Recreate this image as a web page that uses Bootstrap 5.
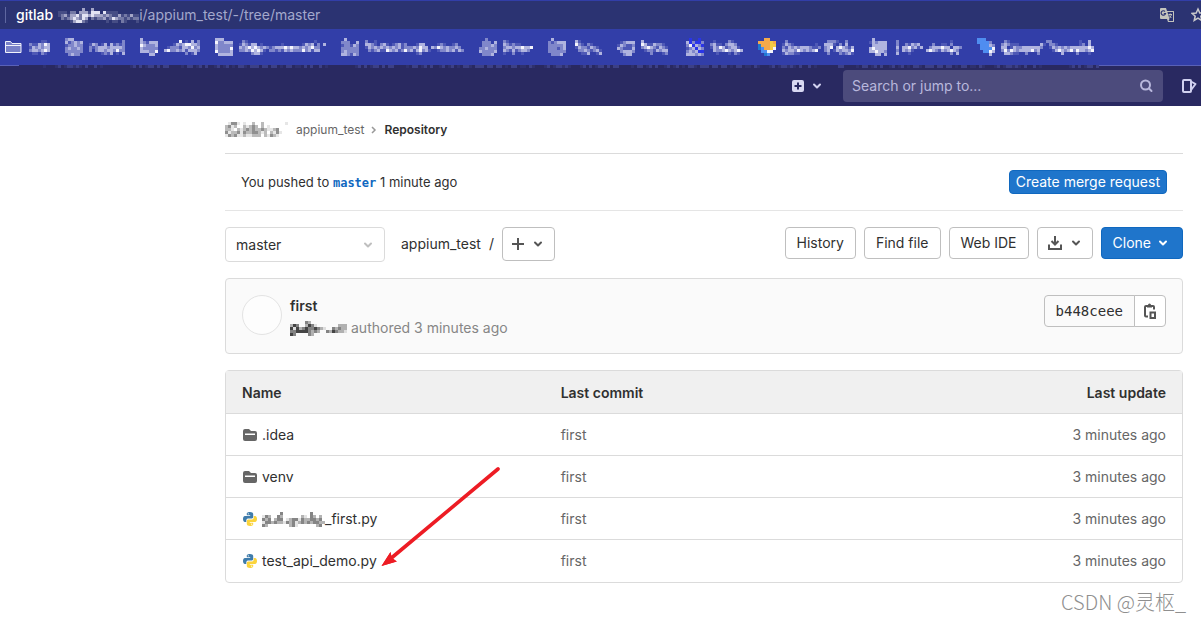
<!DOCTYPE html>
<html lang="en">
<head>
<meta charset="utf-8">
<meta name="viewport" content="width=device-width, initial-scale=1">
<title>Repository · appium_test</title>
<link href="https://cdn.jsdelivr.net/npm/bootstrap@5.3.0/dist/css/bootstrap.min.css" rel="stylesheet">
<style>
  :root { --line: #dbdbdb; --btn-line: #bfbfbf; --ink: #303030; --soft: #666; --blue: #1f75cb; }
  body { font-family: Inter, "Noto Sans CJK SC", sans-serif; font-size: 14px; line-height: 20px; color: var(--ink); background: #fff; overflow-x: hidden; }
  a { color: inherit; text-decoration: none; }
  svg { display: block; flex: none; }
  .url-bar { height: 29px; background: #2b3372; border-top: 1px solid #323ea8; color: #a3a8cc; padding: 0 0 0 5px; }
  .url-sep { width: 1px; height: 16px; background: #5f67a0; }
  .url-host { color: #fff; font-weight: 500; padding: 0 5px 0 10px; }
  .bookmark-bar { height: 36px; background: #323ea8; padding: 0 5px; gap: 15px; }
  .bookmark-item { gap: 6px; }
  .edge-strip { height: 3px; background: #292961; }
  .edge-line { height: 1px; background: #5961b8; }
  .top-nav { height: 38px; background: #292961; color: #d1d1f0; padding: 0 4px 2px 0; gap: 18px; }
  .icon-btn { border: 0; background: none; color: inherit; padding: 0; }
  .search-box { width: 320px; height: 32px; background: #4c4b7c; border-radius: 4px; padding: 0 9px; color: #b9b8dc; }
  .search-box input { border: 0; background: none; color: inherit; outline: 0; padding: 0; min-width: 0; }
  .search-box input::placeholder { color: #b9b8dc; opacity: 1; }
  .page-body { padding: 0 18px 0 225px; }
  .crumbs { height: 48px; font-size: 12px; border-bottom: 1px solid var(--line); color: var(--soft); }
  .crumbs b { color: var(--ink); font-weight: 600; }
  .push-row { height: 57px; padding: 0 16px; font-size: 13px; border-bottom: 1px solid #e5e5e5; }
  .push-row a { font: 700 12px "DejaVu Sans Mono", monospace; color: #1068bf; }
  .gl-btn { height: 32px; padding: 0 11px; border: 1px solid var(--btn-line); border-radius: 4px; background: #fff; color: var(--ink); font-size: 14px; line-height: 20px; display: inline-flex; align-items: center; justify-content: center; gap: 4px; white-space: nowrap; }
  .gl-blue { background: var(--blue); border-color: #1068bf; color: #fff; }
  .gl-slim { height: 24px; padding: 0 6px; }
  .gl-tall { height: 34px; padding: 0 8px; gap: 5px; }
  .ref-select { width: 160px; height: 35px; border-color: var(--line); border-radius: 4px; padding: 0 32px 0 10px; font-size: 14px; color: var(--ink);
    background-image: url("data:image/svg+xml,%3csvg xmlns='http://www.w3.org/2000/svg' viewBox='0 0 16 16'%3e%3cpath fill='none' stroke='%23bfbfbf' stroke-width='2' stroke-linecap='round' stroke-linejoin='round' d='M5 6.500 8 9.500l3-3'/%3e%3c/svg%3e"); background-size: 16px; background-position: right 8px center; }
  .commit-box { height: 76px; padding: 16px; border: 1px solid var(--line); border-radius: 4px; background: #fafafa; line-height: 22px; }
  .avatar-ring { width: 40px; height: 40px; border-radius: 50%; border: 1px solid #e3e3e3; background: #fdfdfd; }
  .by-line { color: #868686; }
  .sha-group .gl-btn { border-radius: 0 4px 4px 0; padding: 0 7px; margin-left: -1px; }
  .sha-text { font: 14px/20px "DejaVu Sans Mono", monospace; height: 32px; border: 1px solid var(--btn-line); border-radius: 4px 0 0 4px; padding: 5px 11px; }
  .files-wrap { border: 1px solid var(--line); border-radius: 4px; }
  .files { --bs-table-bg: transparent; color: var(--ink); table-layout: fixed; }
  .files > :not(caption) > * > * { padding: 11px 16px 10px; height: 42px; border-bottom: 1px solid var(--line); line-height: 20px; vertical-align: middle; }
  .files > thead > tr > th { background: #f0f0f0; font-weight: 600; padding-top: 12px; }
  .files > tbody > tr:last-child > td { border-bottom: 0; padding-bottom: 11px; }
  .files td + td { color: var(--soft); }
  .pointer { left: 154px; top: 94px; pointer-events: none; }
  .watermark { right: 15px; top: 589px; font: 300 20px/26px "Noto Sans CJK SC", sans-serif; color: #8f8f8f; }
</style>
</head>
<body>
<header>
  <div class="url-bar d-flex align-items-center">
    <span class="url-sep"></span>
    <span class="url-host">gitlab</span>
    <svg class="mosaic" data-c="#e3e4f3" data-m="000000003003000000000000000/111022033314440411110000000/123133424434333232113121311/021234324302122312432212122/000013442100000010110210001"></svg>
    <span>i/appium_test/-/tree/master</span>
    <span class="d-flex ms-auto gap-3">
      <button class="icon-btn" aria-label="Translate"><svg width="16" height="16" viewBox="0 0 16 16"><path fill="#c3c4bd" d="M2 1h5l1 3h6.500a.5.5 0 0 1 .5.5v10a.5.5 0 0 1-.5.5H9l-1-3H2a1 1 0 0 1-1-1V2a1 1 0 0 1 1-1z"/><path fill="#2b3372" d="M8.400 5H14v9H9.500l1-2z"/><path fill="none" stroke="#2b3372" stroke-width="1.200" d="M6 4.500A2.200 2.200 0 1 0 6.500 6.500H4.800"/><path fill="none" stroke="#c3c4bd" d="M9.500 7.500H13M11.200 6.500v1m1.300 0c-.3 1.500-1.500 2.500-2 3M10.300 8.500l2 2.500"/></svg></button>
      <button class="icon-btn" aria-label="Bookmark"><svg width="10" height="16" viewBox="0 0 10 16"><path fill="none" stroke="#c9c9cc" stroke-width="1.500" d="m7 2 1.800 4 4.200.4-3.200 2.800 1 4.300L7 11.200l-3.800 2.300 1-4.300L1 6.400 5.200 6z"/></svg></button>
    </span>
  </div>
  <nav class="bookmark-bar d-flex align-items-center" aria-label="Bookmarks">
    <a href="#" class="bookmark-item d-flex align-items-center"><svg width="18" height="14" viewBox="0 0 18 14"><path fill="#7880c8" stroke="#f1f2fb" d="M.500 12.500v-11h5l1.500 2h9v9z"/><path fill="none" stroke="#f1f2fb" d="M1 5.500h15"/></svg><svg class="mosaic" data-m="0000110/2113243/1323233/2332343/0110210"></svg></a>
    <a href="#" class="bookmark-item d-flex align-items-center"><svg class="mosaic" data-m="233000/312323/122322/232232/222222/023220"></svg><svg class="mosaic" data-m="000000000002/132013031212/212333233332/202332332422/000012130103"></svg></a>
    <a href="#" class="bookmark-item d-flex align-items-center"><svg class="mosaic" data-m="300000/321333/432223/322222/333224/000330"></svg><svg class="mosaic" data-m="000004010302/000132344332/012221332423/342232313332/000000020130"></svg></a>
    <a href="#" class="bookmark-item d-flex align-items-center"><svg class="mosaic" data-m="333000/422333/322222/322224/422223/033333"></svg><svg class="mosaic" data-m="02100000000000000000000001000/13213301000000100000013230203/32343432321233343433232342200/22324343102212132322242313300/00002331000000000000000000000"></svg></a>
    <a href="#" class="bookmark-item d-flex align-items-center"><svg class="mosaic" data-m="030000/222003/122132/222222/232222/332132"></svg><svg class="mosaic" data-m="200100000000000000000000000000000/332102310123120001330000121001200/132323232323122232433032432322320/021231143231242313423100122323132/000000000000000001200000000000000"></svg></a>
    <a href="#" class="bookmark-item d-flex align-items-center"><svg class="mosaic" data-m="002000/022203/022232/223222/322223/022230"></svg><svg class="mosaic" data-m="2100000000/3212110000/2332334334/3213123320/1002001000"></svg></a>
    <a href="#" class="bookmark-item d-flex align-items-center"><svg class="mosaic" data-m="030000/212333/222223/222123/222222/022230"></svg><svg class="mosaic" data-m="0310000000/0421021000/0132213210/0022321231/0001130013"></svg></a>
    <a href="#" class="bookmark-item d-flex align-items-center"><svg class="mosaic" data-m="000000/012333/132112/321113/023332/002330"></svg><svg class="mosaic" data-m="3000000000/4311322100/2343213210/0122132330/0002000120"></svg></a>
    <a href="#" class="bookmark-item d-flex align-items-center"><svg class="mosaic" data-m="0b00b0/3b2bb2/24b32b/123b32/2323bb/333232"></svg><svg class="mosaic" data-m="01000021000/23110233200/13243123310/03223432343/00100010210"></svg></a>
    <a href="#" class="bookmark-item d-flex align-items-center"><svg class="mosaic" data-m="00oo00/ooooyo/coooyy/csooy4/0ss440/00cs00"></svg><svg class="mosaic" data-m="020000000000000222100200/132100000001003331020300/213232333211202340343213/323324323234002301323324/132211000000000200021231"></svg></a>
    <a href="#" class="bookmark-item d-flex align-items-center"><svg class="mosaic" data-m="030000/132333/033333/343333/334332/003303"></svg><svg class="mosaic" data-m="02000000000000000001000/02002132300002001102000/03033423130023334330332/02032310000343213234320/03000100000000000002030"></svg></a>
    <a href="#" class="bookmark-item d-flex align-items-center"><svg class="mosaic" data-m="sss000/ssss20/0sss32/0ssss4/00ss43/000030"></svg><svg class="mosaic" data-m="0210000000000002200000000010030/2321110000000310221000000012030/3301322333333200132323233333343/2424323333423000013432342433234/0332110020002000000030000200010"></svg></a>
  </nav>
  <div class="edge-strip d-flex">
    <span class="edge-line" style="width:19px"></span>
    <svg class="mosaic ms-4" id="edge" data-c="#5964bd"></svg>
    <span class="edge-line flex-grow-1"></span>
  </div>
  <div class="top-nav d-flex align-items-center justify-content-end">
    <button class="icon-btn d-flex align-items-center gap-1" aria-label="New">
      <svg width="14" height="14" viewBox="0 0 14 14"><path fill="#d8d8f2" fill-rule="evenodd" d="M3 1h8a2 2 0 0 1 2 2v8a2 2 0 0 1-2 2H3a2 2 0 0 1-2-2V3a2 2 0 0 1 2-2zm3 2.500V6H3.500v2H6v2.500h2V8h2.500V6H8V3.500z"/></svg>
      <svg width="16" height="16" viewBox="0 0 16 16" fill="none" stroke="currentColor" stroke-width="2" stroke-linecap="round" stroke-linejoin="round"><path d="M5 6.500 8 9.500l3-3"/></svg>
    </button>
    <label class="search-box d-flex align-items-center">
      <input class="flex-grow-1" type="text" placeholder="Search or jump to..." aria-label="Search or jump to">
      <svg width="16" height="16" viewBox="0 0 16 16" fill="none" stroke="currentColor" stroke-width="2" stroke-linecap="round"><circle cx="7.500" cy="7" r="4.500"/><path d="m11 10.500 2.500 2.500"/></svg>
    </label>
    <button class="icon-btn" aria-label="Issues"><svg width="16" height="16" viewBox="0 0 16 16" fill="none" stroke="currentColor" stroke-width="2" stroke-linejoin="round"><path d="M3 2h6a1 1 0 0 1 1 1v10a1 1 0 0 1-1 1H3a1 1 0 0 1-1-1V3a1 1 0 0 1 1-1zM10 3.500 14.500 6 10 12"/></svg></button>
  </div>
</header>

<main class="page-body">
  <nav class="crumbs d-flex align-items-center" aria-label="Breadcrumb">
    <svg class="mosaic" data-c="#555" data-m="013310100200200000001/231200212320201000000/221021232322321123000/312231322332120213100/132311211222021321000"></svg>
    <a href="#" class="ps-2">appium_test</a>
    <svg width="20" height="12" viewBox="0 0 20 12" fill="none" stroke="#999" stroke-width="1.500"><path d="m8 3 3 3-3 3"/></svg>
    <b>Repository</b>
  </nav>

  <section class="push-row d-flex align-items-center justify-content-between">
    <span>You pushed to <a href="#">master</a> 1 minute ago</span>
    <button class="gl-btn gl-blue gl-slim">Create merge request</button>
  </section>

  <section class="d-flex align-items-start py-3">
    <select class="form-select ref-select" aria-label="Branch"><option>master</option></select>
    <div class="d-flex align-items-center ps-3">
      <a href="#">appium_test</a><span class="ps-2">/</span>
      <button class="gl-btn gl-tall ms-2" aria-label="Add to tree">
        <svg width="14" height="16" viewBox="0 0 14 16" stroke="#555" stroke-width="2"><path d="M7 2v12M1 8h12"/></svg>
        <svg width="16" height="16" viewBox="0 0 16 16" fill="none" stroke="#555" stroke-width="2" stroke-linecap="round" stroke-linejoin="round"><path d="m5 6.500 3 3 3-3"/></svg>
      </button>
    </div>
    <div class="d-flex gap-2 ms-auto">
      <button class="gl-btn">History</button>
      <button class="gl-btn">Find file</button>
      <button class="gl-btn">Web IDE</button>
      <button class="gl-btn px-2" aria-label="Download">
        <svg width="18" height="16" viewBox="0 0 18 16" fill="none" stroke="#555" stroke-width="2"><path d="M9 1v8M5.500 6 9 9.500 12.500 6M3 9.500V14h12V9.500"/></svg>
        <svg width="16" height="16" viewBox="0 0 16 16" fill="none" stroke="#555" stroke-width="2" stroke-linecap="round" stroke-linejoin="round"><path d="m5 6.500 3 3 3-3"/></svg>
      </button>
      <button class="gl-btn gl-blue">Clone
        <svg width="16" height="16" viewBox="0 0 16 16" fill="none" stroke="#fff" stroke-width="2" stroke-linecap="round" stroke-linejoin="round"><path d="m5 6.500 3 3 3-3"/></svg>
      </button>
    </div>
  </section>

  <section class="commit-box d-flex">
    <span class="avatar-ring"></span>
    <div class="ps-2">
      <a href="#" class="fw-semibold">first</a>
      <div class="by-line d-flex align-items-center"><svg class="mosaic me-1" data-c="#444" data-m="0000032000000000000/2430024310000000222/4142343343210032322/3344443232003243221/4300003200000000000"></svg>authored 3 minutes ago</div>
    </div>
    <div class="sha-group d-flex align-items-start ms-auto">
      <span class="sha-text">b448ceee</span>
      <button class="gl-btn" aria-label="Copy commit SHA"><svg width="16" height="16" viewBox="0 0 16 16" fill="none" stroke="#555" stroke-width="2"><path d="M6 13.500H4a1 1 0 0 1-1-1V4a1 1 0 0 1 1-1h7a1 1 0 0 1 1 1v2.500M8.500 9.500H13V15H8.500z"/><path fill="#555" stroke="none" d="M5 4.500V2h1a1.500 1.500 0 0 1 3 0h1v2.500z"/></svg></button>
    </div>
  </section>

  <section class="files-wrap position-relative mt-3">
    <table class="table files mb-0">
      <thead><tr><th scope="col">Name</th><th scope="col">Last commit</th><th scope="col" class="text-end">Last update</th></tr></thead>
      <tbody>
        <tr><td><a href="#" class="d-flex align-items-center gap-1"><svg width="16" height="16" viewBox="0 0 16 16"><use href="#i-folder"/></svg>.idea</a></td><td>first</td><td class="text-end">3 minutes ago</td></tr>
        <tr><td><a href="#" class="d-flex align-items-center gap-1"><svg width="16" height="16" viewBox="0 0 16 16"><use href="#i-folder"/></svg>venv</a></td><td>first</td><td class="text-end">3 minutes ago</td></tr>
        <tr><td><a href="#" class="d-flex align-items-center gap-1"><svg width="16" height="16" viewBox="0 0 16 16"><use href="#i-python"/></svg><span class="d-flex align-items-center"><svg class="mosaic" data-c="#444" data-m="000000300000000030000/132003200000021032020/323023301233132233230/133232213231232323322/320000000231000000230"></svg>_first.py</span></a></td><td>first</td><td class="text-end">3 minutes ago</td></tr>
        <tr><td><a href="#" class="d-flex align-items-center gap-1"><svg width="16" height="16" viewBox="0 0 16 16"><use href="#i-python"/></svg>test_api_demo.py</a></td><td>first</td><td class="text-end">3 minutes ago</td></tr>
      </tbody>
    </table>
    <svg class="pointer position-absolute" width="124" height="106" viewBox="0 0 124 106"><path stroke="#ed1c24" stroke-width="3.600" stroke-linecap="round" d="M118 4 12 92.500"/><path fill="#ed1c24" d="M1.500 101 10.500 87 11.500 92.500 16.500 96.500z"/><path fill="#ed1c24" d="M1.500 101 10.500 87 12 93 17 96.500z"/></svg>
  </section>
</main>
<div class="watermark position-absolute">CSDN @灵枢_</div>

<svg width="0" height="0" class="position-absolute" aria-hidden="true">
  <symbol id="i-folder" viewBox="0 0 16 16"><path fill="#666" fill-rule="evenodd" d="M3 2h4l2 2h4a2 2 0 0 1 2 2v6a2 2 0 0 1-2 2H3a2 2 0 0 1-2-2V4a2 2 0 0 1 2-2zm0 4.500v1.500h10V6.500z"/></symbol>
  <symbol id="i-python" viewBox="0 0 16 16"><path fill="#3f7cab" fill-rule="evenodd" d="M8 1C5 1 4.800 2.200 4.800 3v1.300H8.200V5H3C1.500 5 1 6.500 1 8s.6 3 2 3h1.300V9.500C4.300 8 5.500 7.500 6.300 7.500h3.400c1 0 1.500-.8 1.500-1.500V3c0-1.300-1.200-2-3.200-2zM6.300 2.200a.6.6 0 1 1 0 1.200.6.6 0 0 1 0-1.200z"/><path fill="#fbd43b" fill-rule="evenodd" d="M8 15c3 0 3.200-1.200 3.200-2v-1.300H7.800V11H13c1.500 0 2-1.500 2-3s-.6-3-2-3h-1.300v1.500c0 1.500-1.200 2-2 2H6.300c-1 0-1.500.8-1.500 1.500v3c0 1.300 1.200 2 3.200 2zm1.700-1.200a.6.6 0 1 1 0-1.200.6.6 0 0 1 0 1.200z"/></symbol>
</svg>

<script>
  // Redacted text is drawn as 3px tiles: digits are strengths, letters are tints.
  const tints = { b: '#2a35e8', o: '#f5a94b', y: '#f3cb45', s: '#4f8df0', c: '#1f7ad0' };
  const strip = '1000120122121020020100000000012020122020220000102201202001201201022102220220220102201102';
  document.getElementById('edge').dataset.m = Array.from({ length: 352 }, (_, i) => strip[(i + (i / 88 | 0) * 13) % 88]).join('');
  document.querySelectorAll('.mosaic').forEach(el => {
    const rows = el.dataset.m.split('/'), w = rows[0].length * 3, h = rows.length * 3;
    const base = el.dataset.c || '#f4f4fc', a = [0, .15, .4, .65, 1];
    el.setAttribute('width', w); el.setAttribute('height', h);
    el.setAttribute('viewBox', `0 0 ${w} ${h}`);
    el.setAttribute('shape-rendering', 'crispEdges');
    el.innerHTML = rows.map((r, y) => [...r].map((c, x) => c === '0' ? '' :
      `<rect x="${x * 3}" y="${y * 3}" width="3" height="3" fill="${tints[c] || base}" opacity="${tints[c] ? 1 : a[c]}"/>`).join('')).join('');
  });
</script>
<script src="https://cdn.jsdelivr.net/npm/bootstrap@5.3.0/dist/js/bootstrap.bundle.min.js"></script>
</body>
</html>
